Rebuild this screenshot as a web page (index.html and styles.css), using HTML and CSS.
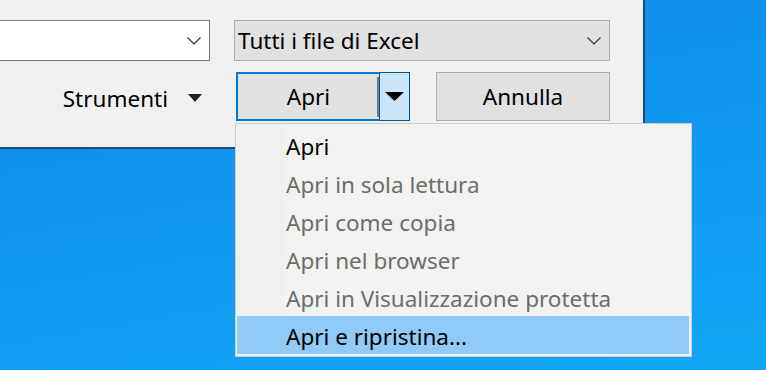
FILE: index.html
```html
<!DOCTYPE html>
<html lang="it">
<head>
    <meta charset="UTF-8">
    <title>Apri</title>
    <link rel="stylesheet" href="styles.css">
</head>
<body>
    <div class="dialog">
        <div class="row">
            <div class="combo combo-name">
                <span></span>
                <svg class="chevron" width="14" height="8" viewBox="0 0 14 8"><path d="M0.5 0.5 L7 7 L13.5 0.5" fill="none" stroke="#333" stroke-width="1.2"/></svg>
            </div>
            <div class="combo combo-type">
                <span>Tutti i file di Excel</span>
                <svg class="chevron" width="14" height="8" viewBox="0 0 14 8"><path d="M0.5 0.5 L7 7 L13.5 0.5" fill="none" stroke="#333" stroke-width="1.2"/></svg>
            </div>
        </div>

        <div class="row row-buttons">
            <div class="tools">
                <span>Strumenti</span>
                <svg width="14" height="8" viewBox="0 0 14 8"><path d="M0 0 H14 L7 8 Z" fill="#222"/></svg>
            </div>
            <div class="split">
                <div class="split-main">Apri</div>
                <div class="split-arrow">
                    <svg width="19" height="9" viewBox="0 0 19 9"><path d="M0 0 H19 L9.5 9 Z" fill="#000"/></svg>
                </div>
            </div>
            <div class="btn">Annulla</div>
        </div>
    </div>

    <!-- Menu a tendina -->
    <ul class="menu">
        <li>Apri</li>
        <li class="disabled">Apri in sola lettura</li>
        <li class="disabled">Apri come copia</li>
        <li class="disabled">Apri nel browser</li>
        <li class="disabled">Apri in Visualizzazione protetta</li>
        <li class="active">Apri e ripristina...</li>
    </ul>
</body>
</html>
```

FILE: styles.css
```css
/* Base */
* {
    box-sizing: border-box;
    margin: 0;
    padding: 0;
}

body {
    width: 766px;
    height: 370px;
    overflow: hidden;
    position: relative;
    font-family: 'Noto Sans', 'Open Sans', sans-serif;
    font-size: 22.5px;
    color: #000;
    background: linear-gradient(170deg, #0e8ae6 0%, #1197f0 50%, #12a6f6 100%);
}

/* Finestra di dialogo */
.dialog {
    width: 645px;
    height: 149px;
    background-color: #f0f0f0;
    border-right: 2px solid #1d4b70;
    border-bottom: 2px solid #24506f;
    padding: 20px 33px 0 0;
}

.row {
    display: flex;
    gap: 24px;
}

.combo {
    height: 41px;
    display: flex;
    align-items: center;
    justify-content: space-between;
    padding: 0 8px 0 3px;
}

.combo span {
    line-height: 1;
    padding-top: 2px;
}

.combo-name {
    flex: 1;
    margin-left: -10px;
    background-color: #fff;
    border: 1px solid #7a7a7a;
}

.combo-type {
    width: 376px;
    background-color: #e1e1e1;
    border: 1px solid #adadad;
}

.chevron {
    flex-shrink: 0;
}

/* Pulsanti */
.row-buttons {
    margin-top: 11px;
    justify-content: flex-end;
    align-items: center;
    gap: 26px;
}

.tools {
    display: flex;
    align-items: center;
    gap: 20px;
    margin-right: 8px;
    padding-top: 3px;
}

.split {
    width: 174px;
    height: 49px;
    display: flex;
}

.split-main {
    flex: 1;
    display: flex;
    align-items: center;
    justify-content: center;
    background-color: #e1e1e1;
    border: 2px solid #0078d7;
    border-right: none;
    position: relative;
}

.split-main::after {
    content: '';
    position: absolute;
    right: 0;
    top: 3px;
    bottom: 2px;
    width: 2px;
    background-color: #7a7a7a;
}

.split-arrow {
    width: 31px;
    display: flex;
    align-items: center;
    justify-content: center;
    background-color: #cce4f7;
    border: 1px solid #005499;
}

.btn {
    width: 174px;
    height: 49px;
    display: flex;
    align-items: center;
    justify-content: center;
    background-color: #e1e1e1;
    border: 1px solid #adadad;
}

/* Menu */
.menu {
    list-style: none;
    position: absolute;
    left: 235px;
    top: 123px;
    width: 457px;
    padding: 2px 2px 2px 1px;
    background: linear-gradient(90deg, #f0f0f0 0, #f0f0f0 47px, #f2f2f1 47px);
    border: 1px solid #cccccc;
}

.menu li {
    height: 38px;
    display: flex;
    align-items: center;
    padding-left: 49px;
    padding-top: 2px;
}

.menu li.disabled {
    color: #6d6d6d;
}

.menu li.active {
    background-color: #91c9f7;
}
```
